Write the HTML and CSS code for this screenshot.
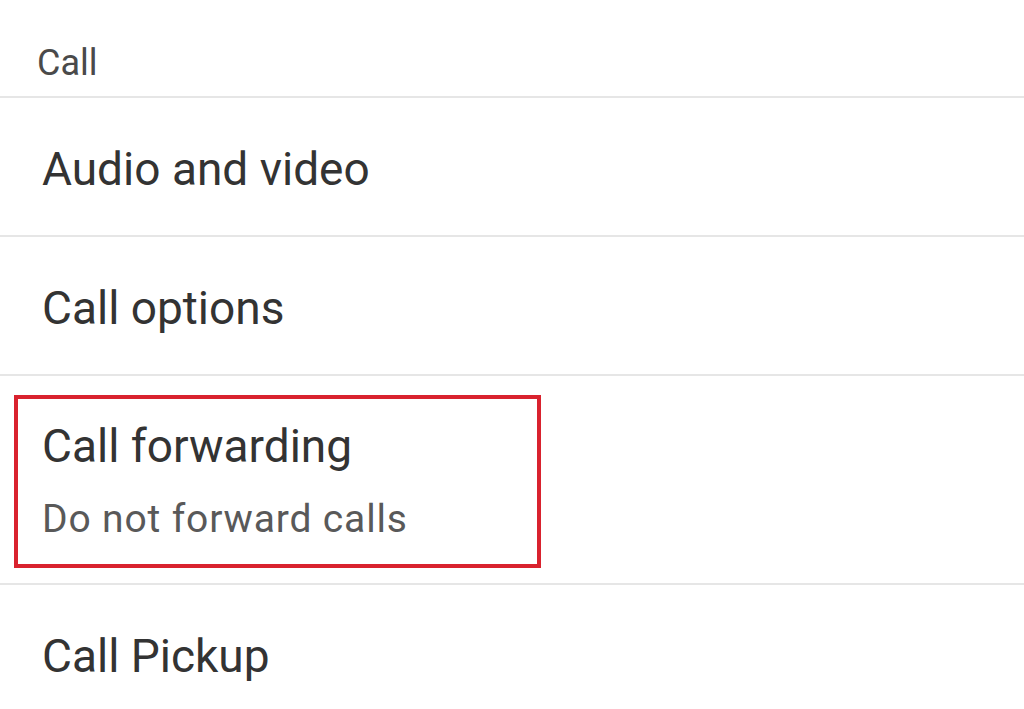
FILE: index.html
```html
<!DOCTYPE html>
<html lang="en">
<head>
<meta charset="utf-8">
<title>Call settings</title>
<link rel="stylesheet" href="styles.css">
</head>
<body>
<main class="settings">
  <div class="section-title">Call</div>
  <div class="row"><span class="row-title">Audio and video</span></div>
  <div class="row"><span class="row-title">Call options</span></div>
  <div class="row row-highlighted">
    <div class="highlight-box">
      <div class="row-title">Call forwarding</div>
      <div class="row-sub">Do not forward calls</div>
    </div>
  </div>
  <div class="row row-last"><span class="row-title">Call Pickup</span></div>
</main>
</body>
</html>
```
FILE: styles.css
```css
html, body {
  margin: 0;
  padding: 0;
  background: #ffffff;
}
body {
  font-family: Roboto, "Liberation Sans", Arial, sans-serif;
  color: #333333;
  width: 1024px;
  height: 709px;
  overflow: hidden;
}
.settings {
  display: flex;
  flex-direction: column;
}
.section-title {
  font-size: 36px;
  line-height: 36px;
  color: #4a4a4a;
  padding: 45px 0 15px 37px;
  border-bottom: 2px solid #e6e6e6;
}
.row {
  display: flex;
  flex-direction: column;
  padding: 48px 0 43px 42px;
  border-bottom: 2px solid #e6e6e6;
}
.row-title {
  font-size: 46px;
  line-height: 46px;
  color: #333333;
}
.row-highlighted {
  padding: 19px 0 15px 14px;
}
.highlight-box {
  box-sizing: border-box;
  width: 527px;
  border: 4px solid #d9222e;
  padding: 24px 0 25px 24px;
  display: flex;
  flex-direction: column;
  gap: 31px;
}
.row-sub {
  font-size: 39px;
  line-height: 39px;
  letter-spacing: 0.85px;
  color: #595959;
}
.row-last {
  border-bottom: none;
}
```
